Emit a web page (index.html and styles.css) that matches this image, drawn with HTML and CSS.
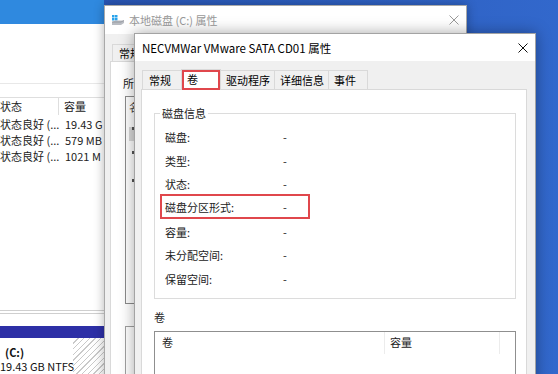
FILE: index.html
```html
<!DOCTYPE html>
<html lang="zh-CN">

<head>
    <meta charset="UTF-8">
    <meta name="viewport" content="width=device-width, initial-scale=1.0">
    <title>NECVMWar VMware SATA CD01 属性</title>
    <link rel="stylesheet" href="styles.css">
</head>

<body>
    <!-- Disk management, behind everything -->
    <div class="win win-disk">
        <div class="disk-title"></div>
        <div class="disk-toolbar"></div>
        <div class="disk-table">
            <div class="disk-row disk-head"><span class="c-status">状态</span><span class="c-size">容量</span></div>
            <div class="disk-row"><span class="c-status">状态良好 (...</span><span class="c-size">19.43 G</span></div>
            <div class="disk-row"><span class="c-status">状态良好 (...</span><span class="c-size">579 MB</span></div>
            <div class="disk-row"><span class="c-status">状态良好 (...</span><span class="c-size">1021 M</span></div>
        </div>
        <div class="disk-map">
            <div class="disk-bar"></div>
            <div class="disk-part">
                <div class="part-label">
                    <b>(C:)</b>
                    <span>19.43 GB NTFS</span>
                </div>
            </div>
        </div>
    </div>

    <!-- Local disk properties (inactive) -->
    <div class="win win-back">
        <div class="titlebar">
            <svg class="drive-icon" width="12" height="10" viewBox="0 0 12 10">
                <rect x="0" y="0" width="2.5" height="2.5" fill="#29a3ec" />
                <rect x="3" y="0" width="2.5" height="2.5" fill="#29a3ec" />
                <rect x="0" y="3" width="2.5" height="2.5" fill="#29a3ec" />
                <rect x="3" y="3" width="2.5" height="2.5" fill="#29a3ec" />
                <path d="M0 7 L3 5.5 L12 5.5 L12 8 L9 10 L0 10 Z" fill="#b9bcc2" />
                <path d="M0 7 L9 7 L12 5.5" stroke="#8e939b" stroke-width="0.8" fill="none" />
            </svg>
            <span class="title-text">本地磁盘 (C:) 属性</span>
            <svg class="close" width="10" height="10" viewBox="0 0 10 10">
                <path d="M0.5 0.5 L9.5 9.5 M9.5 0.5 L0.5 9.5" stroke="#9a9a9a" stroke-width="1" />
            </svg>
        </div>
        <div class="win-body back-body">
            <div class="tabs">
                <div class="tab">常规</div>
            </div>
            <div class="panel back-panel">
                <div class="back-label">所有磁盘(A):</div>
                <div class="back-list">
                    <div class="back-list-head">名称</div>
                    <div class="back-item selected"><i></i></div>
                    <div class="back-item"><i></i></div>
                    <div class="back-item"><i></i></div>
                </div>
                <div class="back-box"></div>
            </div>
        </div>
    </div>

    <!-- CD drive properties (active) -->
    <div class="win win-front">
        <div class="titlebar">
            <span class="title-text">NECVMWar VMware SATA CD01 属性</span>
            <svg class="close" width="10" height="10" viewBox="0 0 10 10">
                <path d="M0.5 0.5 L9.5 9.5 M9.5 0.5 L0.5 9.5" stroke="#111" stroke-width="1" />
            </svg>
        </div>
        <div class="win-body front-body">
            <div class="tabs">
                <div class="tab">常规</div>
                <div class="tab active marked">卷</div>
                <div class="tab">驱动程序</div>
                <div class="tab">详细信息</div>
                <div class="tab">事件</div>
            </div>
            <div class="panel front-panel">
                <fieldset class="group">
                    <legend>磁盘信息</legend>
                    <div class="info-row"><span class="info-key">磁盘:</span><span>-</span></div>
                    <div class="info-row"><span class="info-key">类型:</span><span>-</span></div>
                    <div class="info-row"><span class="info-key">状态:</span><span>-</span></div>
                    <div class="info-row marked"><span class="info-key">磁盘分区形式:</span><span>-</span></div>
                    <div class="info-row"><span class="info-key">容量:</span><span>-</span></div>
                    <div class="info-row"><span class="info-key">未分配空间:</span><span>-</span></div>
                    <div class="info-row"><span class="info-key">保留空间:</span><span>-</span></div>
                </fieldset>

                <div class="vol-label">卷</div>
                <div class="vol-list">
                    <div class="vol-head">
                        <span class="vol-name">卷</span>
                        <span class="vol-size">容量</span>
                        <span class="vol-rest"></span>
                    </div>
                </div>
            </div>
        </div>
    </div>
</body>

</html>
```

FILE: styles.css
```css
body {
    margin: 0;
    width: 558px;
    height: 374px;
    overflow: hidden;
    position: relative;
    background: linear-gradient(90deg, #2752b0, #3268cc);
    font-family: "Noto Sans CJK SC", sans-serif;
    font-size: 11px;
    color: #000;
}

.win {
    position: absolute;
    box-sizing: border-box;
}

/* ---- disk management ---- */

.win-disk {
    left: 0;
    top: 0;
    width: 104px;
    height: 374px;
    background: #fff;
    display: flex;
    flex-direction: column;
}

.disk-title {
    height: 24px;
    background: #2f89df;
}

.disk-toolbar {
    height: 59px;
    border-bottom: 1px solid #e8e8e8;
}

.disk-table {
    padding-top: 13px;
    color: #222;
}

.disk-row {
    display: grid;
    grid-template-columns: 59px 1fr;
    height: 16px;
    line-height: 16px;
    white-space: nowrap;
    overflow: hidden;
}

.disk-row .c-size {
    padding-left: 6px;
}

.disk-head {
    height: 17px;
    border-top: 1px solid #dedede;
    margin-bottom: 1px;
}

.disk-head .c-status {
    border-right: 1px solid #dedede;
}

.disk-head .c-size {
    padding-left: 5px;
}

.disk-map {
    margin-top: auto;
    border-top: 4px double #cfcfcf;
    padding-top: 12px;
    height: 64px;
    box-sizing: border-box;
}

.disk-bar {
    height: 12px;
    background: #2d2fa6;
}

.disk-part {
    height: 36px;
    background: repeating-linear-gradient(135deg, #fff 0 3px, #c9c9c9 3px 4px);
}

.part-label {
    width: 73px;
    height: 100%;
    background: #fff;
    padding-top: 8px;
    box-sizing: border-box;
    display: flex;
    flex-direction: column;
    gap: 1px;
    line-height: 13px;
    white-space: nowrap;
    color: #111;
}

.part-label b {
    margin-left: 5px;
}

/* ---- shared window parts ---- */

.titlebar {
    height: 28px;
    background: #fff;
    display: flex;
    align-items: center;
    padding: 0 7px;
    white-space: nowrap;
}

.titlebar .close {
    margin-left: auto;
    flex: none;
}

.win-body {
    background: #f0f0f0;
}

.tabs {
    display: flex;
    align-items: flex-end;
    height: 19px;
}

.tab {
    height: 19px;
    line-height: 18px;
    min-width: 40px;
    box-sizing: border-box;
    padding: 0 4px 0 5px;
    border: 1px solid #d9d9d9;
    border-bottom: none;
    margin-left: -1px;
    background: #f0f0f0;
    white-space: nowrap;
}

.tab:first-child {
    margin-left: 0;
    padding-left: 6px;
}

.tab.active {
    background: #fff;
    height: 21px;
    margin-bottom: -1px;
    position: relative;
}

.tab.marked {
    box-shadow: inset 0 0 0 2px #e0474c;
}

.panel {
    background: #fff;
    border: 1px solid #d9d9d9;
    box-sizing: border-box;
}

/* ---- back window ---- */

.win-back {
    left: 104px;
    top: 5px;
    width: 363px;
    height: 390px;
    border: 1px solid #a9a9a9;
    background: #f0f0f0;
    box-shadow: 0 0 10px rgba(0, 0, 0, 0.3);
}

.win-back .title-text {
    color: #999;
    font-size: 11px;
    margin-left: 5px;
}

.back-body {
    padding: 10px 6px 0 5px;
}

.back-body .tabs {
    height: 17px;
    padding-left: 2px;
}

.back-body .tab {
    height: 17px;
    line-height: 16px;
}

.back-panel {
    height: 340px;
    padding: 13px 0 0 12px;
}

/* only the first character peeks out from under the front window */
.back-label {
    width: 12px;
    overflow: hidden;
    white-space: nowrap;
    line-height: 16px;
    color: #222;
}

.back-list {
    margin: 5px 0 0 2px;
    height: 208px;
    border: 1px solid #8c8c8c;
    box-sizing: border-box;
    padding-left: 3px;
}

.back-list-head {
    height: 20px;
    width: 5px;
    overflow: hidden;
    line-height: 20px;
    color: #444;
}

.back-item {
    height: 17.5px;
}

.back-item.selected {
    background: #d9d9d9;
    height: 14px;
}

.back-item i {
    display: block;
    width: 3px;
    height: 3px;
    background: #555;
    margin: 10px 0 0 3px;
}

.back-box {
    margin: 22px 0 0 2px;
    height: 60px;
    border: 1px solid #a0a0a0;
    border-bottom: none;
}

/* ---- front window ---- */

.win-front {
    left: 134px;
    top: 33px;
    width: 402px;
    height: 370px;
    border: 1px solid #a3a3a3;
    background: #f0f0f0;
    box-shadow: 0 0 14px rgba(0, 0, 0, 0.35);
}

.win-front .titlebar {
    height: 27px;
}

.win-front .title-text {
    font-size: 11.5px;
    color: #000;
}

.front-body {
    padding: 9px 8px 0 6px;
}

.front-body .tabs {
    padding-left: 1px;
}

.front-panel {
    height: 330px;
    padding: 15px 10px 0 12px;
}

.group {
    margin: 0;
    padding: 4px 10px 7px 10px;
    border: 1px solid #dcdcdc;
}

.group legend {
    margin-left: -5px;
    padding: 0 2px;
    line-height: 16px;
    color: #222;
}

.info-row {
    display: flex;
    align-items: center;
    height: 23.7px;
    color: #222;
}

.info-key {
    width: 118px;
}

.info-row.marked {
    width: 150px;
    height: 25px;
    margin: -2px 0 0.7px -5px;
    padding-left: 5px;
    box-sizing: border-box;
    box-shadow: inset 0 0 0 2px #e0474c;
}

.vol-label {
    margin-top: 10px;
    line-height: 16px;
    color: #222;
}

.vol-list {
    margin-top: 6px;
    height: 60px;
    border: 1px solid #8f8f8f;
}

.vol-head {
    display: flex;
    height: 22px;
    line-height: 20px;
    color: #222;
}

.vol-name {
    width: 222px;
    padding-left: 7px;
    border-right: 1px solid #ececec;
}

.vol-size {
    width: 109px;
    padding-left: 5px;
    border-right: 1px solid #ececec;
}
```
